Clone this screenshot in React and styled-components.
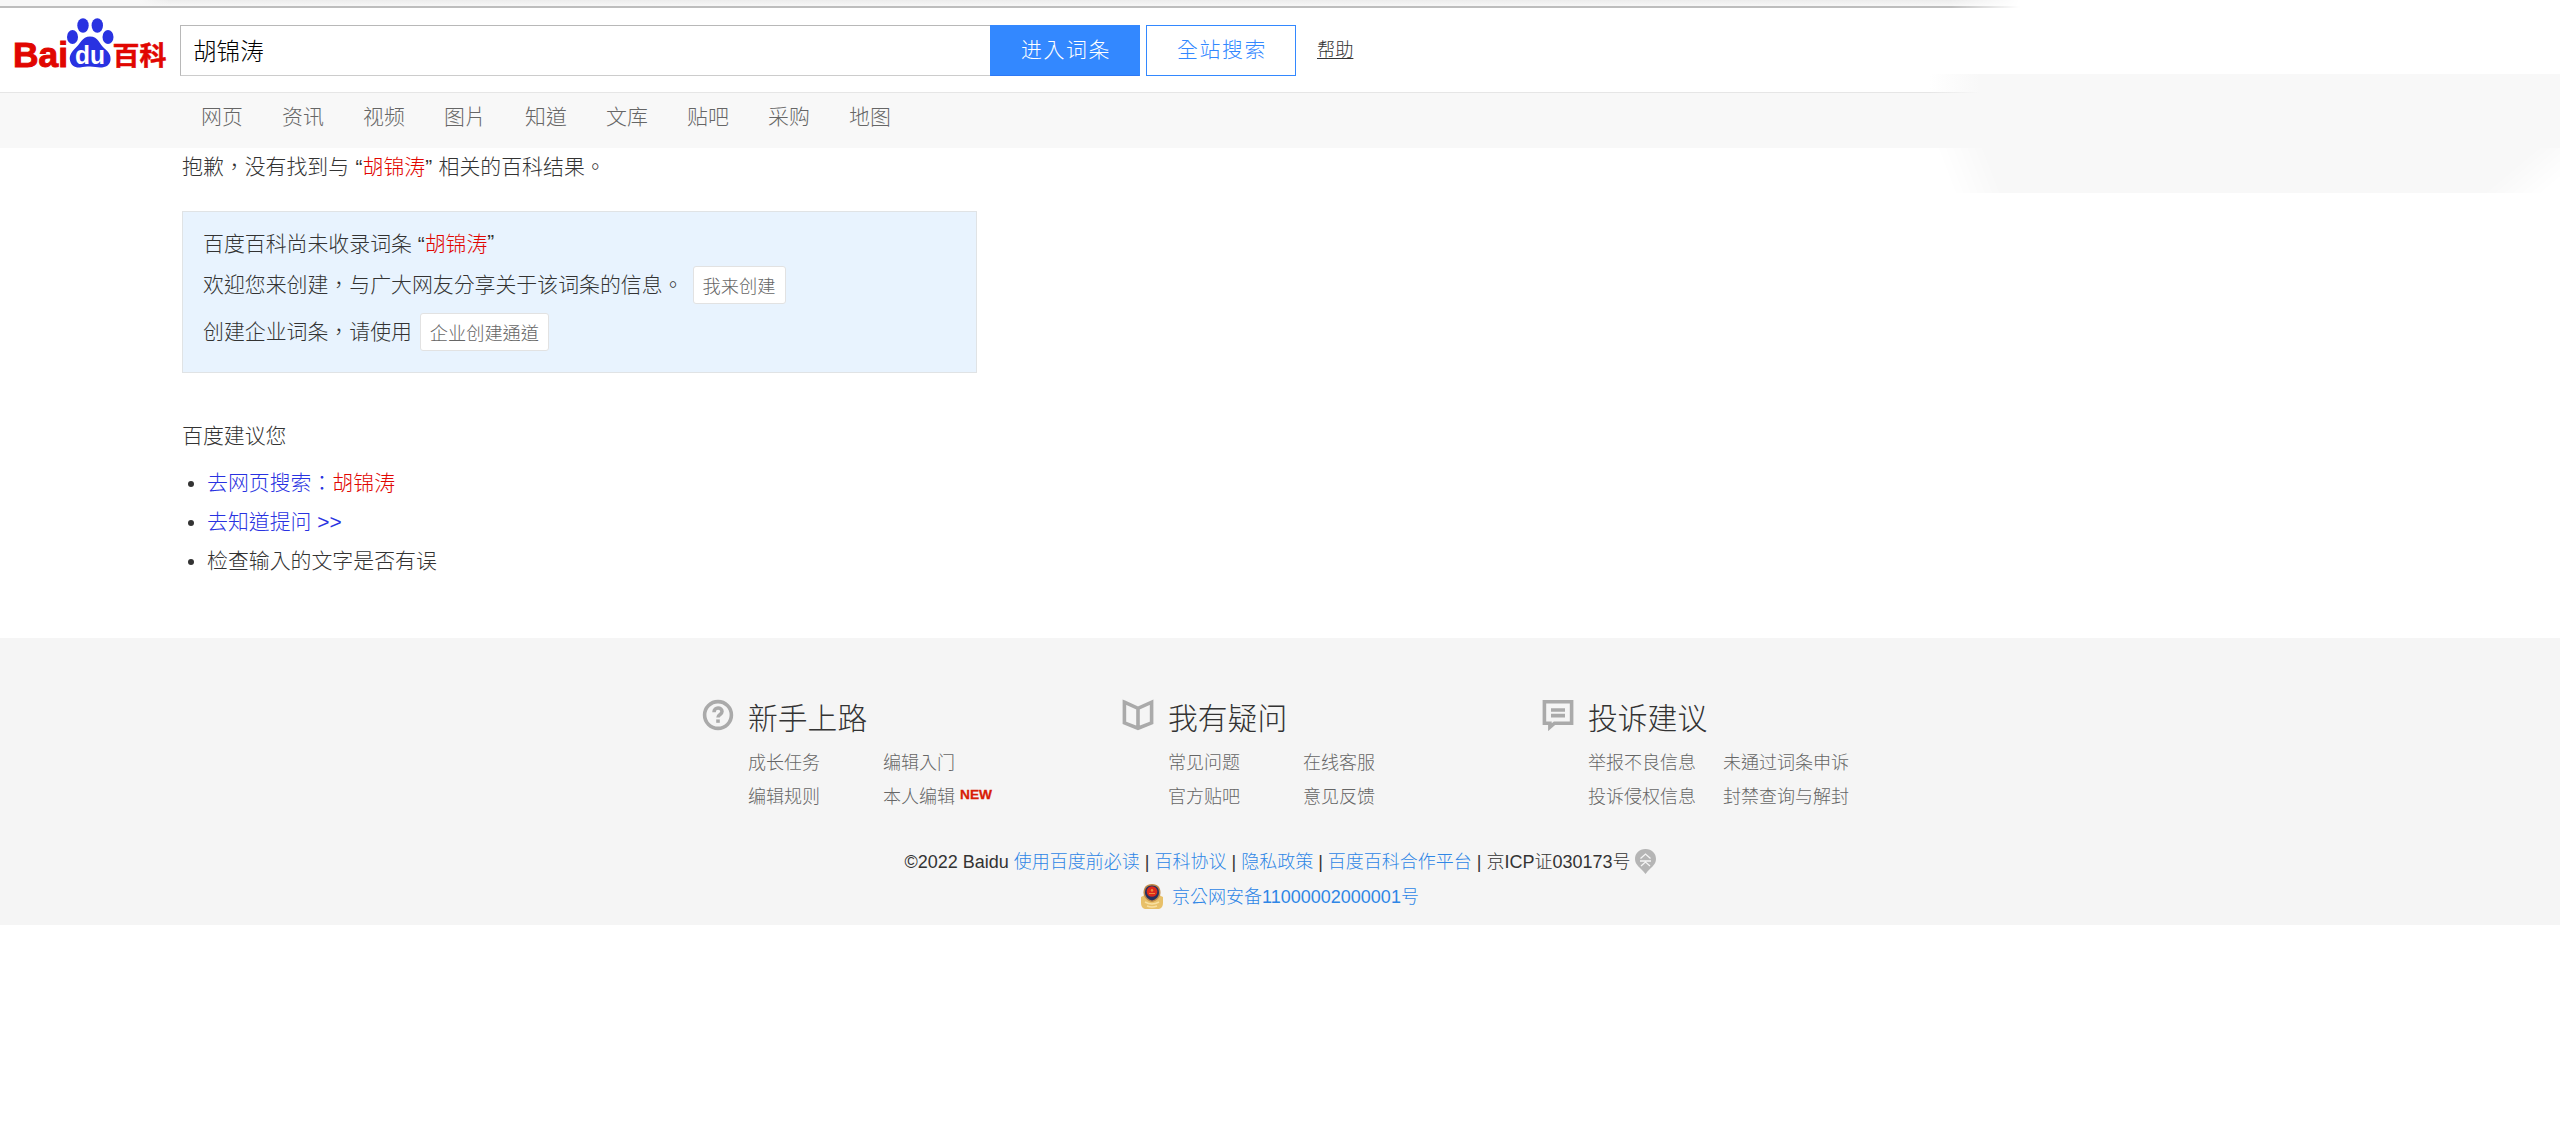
import React from "react";
import styled, { createGlobalStyle, css } from "styled-components";

const GlobalStyle = createGlobalStyle`
  * { box-sizing: border-box; }
  body {
    margin: 0;
    background: #fff;
    color: #333;
    font-family: "Liberation Sans", "Noto Sans CJK TC", "Noto Sans CJK SC", sans-serif;
    font-size: 20.9px;
    font-weight: 300;
  }
  a { color: inherit; text-decoration: none; }
`;

const Page = styled.div`
  position: relative;
  width: 100%;
  min-height: 1142px;
  overflow: hidden;
`;

const TopStrip = styled.div`
  height: 8px;
  border-bottom: 2px solid #bdbdbd;
  background: linear-gradient(90deg, #f7f7f7 140px, transparent 170px),
    linear-gradient(#ececec, #f7f7f7);
  mask-image: linear-gradient(90deg, #000 1950px, transparent 2020px);
`;

const Header = styled.header`
  display: flex;
  align-items: flex-start;
  height: 84px;
  padding: 8px 0 0 14px;
`;

const Logo = styled.svg`
  flex: none;
  width: 154px;
  height: 64px;
  margin-right: 12px;
  overflow: visible;
`;

const SearchInput = styled.input`
  flex: none;
  width: 810px;
  height: 51px;
  margin-top: 9px;
  padding: 0 12px 1px;
  border: 1px solid #b8b8b8;
  border-bottom-color: #ccc;
  border-right: 0;
  border-radius: 0;
  outline: 0;
  color: #000;
  font: inherit;
  font-size: 23.6px;
`;

const SearchButton = styled.button`
  width: 150px;
  height: 51px;
  margin: 9px 6px 0 0;
  padding: 0 0 5px 2px;
  border: 1px solid #38f;
  background: #38f;
  color: #fff;
  font: inherit;
  letter-spacing: 1.6px;
  ${({ $primary }) =>
    $primary
      ? css`border-bottom-color: #2d78f4;`
      : css`
          background: #fff;
          color: #38f;
        `}
`;

const Help = styled.a`
  margin: 21px 0 0 15px;
  font-size: 18.2px;
  line-height: 27px;
  text-decoration: underline;
  text-underline-offset: 2px;
`;

const Nav = styled.nav`
  display: flex;
  height: 56px;
  padding-left: 201px;
  border-top: 1px solid #e6e6e6;
  background: #f8f8f8;
  color: #666;
`;

const NavLink = styled.a`
  width: 81px;
  line-height: 47px;
`;

const Haze = styled.div`
  position: absolute;
  top: 74px;
  right: 0;
  width: 630px;
`;

const HazeBand = styled.div`
  height: 74px;
  background: linear-gradient(90deg, transparent, #f8f8f8 50px);
`;

const HazeTail = styled.div`
  height: 45px;
  background: #f8f8f8;
  mask-image: linear-gradient(69deg, transparent 21px, #000 68px),
    linear-gradient(-40deg, transparent 10px, #000 50px);
  mask-composite: intersect;
`;

const Main = styled.main`
  height: 490px;
  padding-left: 182px;
`;

const Message = styled.p`
  margin: 0;
  padding-top: 3px;
  line-height: 31px;
  word-spacing: 0.6px;
`;

const Keyword = styled.em`
  color: #e10601;
  font-style: normal;
`;

const CreateBox = styled.section`
  display: flex;
  flex-direction: column;
  width: 795px;
  height: 162px;
  margin-top: 29px;
  padding: 12px 20px;
  border: 1px solid #e0e3e5;
  background: #e8f3fe;
`;

const CreateRow = styled.div`
  display: flex;
  align-items: center;
  height: ${({ $h }) => $h}px;
  white-space: pre;
`;

const SmallButton = styled.button`
  width: ${({ $w }) => $w}px;
  height: 38px;
  margin: 4px 0 0 ${({ $gap }) => $gap}px;
  padding: 0 0 1px;
  border: 1px solid #e2e2e2;
  border-radius: 3px;
  background: #fff;
  color: #666;
  font: inherit;
  font-size: 18.2px;
`;

const SuggestTitle = styled.h2`
  margin: 48px 0 0;
  font-size: 20.9px;
  font-weight: 300;
  line-height: 30px;
`;

const SuggestList = styled.ul`
  margin: 12px 0 0;
  padding: 0 0 0 25px;
  line-height: 39px;
`;

const SuggestLink = styled.a`
  color: #2932e1;
`;

const Footer = styled.footer`
  height: 287px;
  background: #f5f5f5;
`;

const Columns = styled.div`
  display: flex;
  height: 207px;
  padding: 62px 0 0 702px;
`;

const Column = styled.section`
  display: flex;
  width: 420px;
`;

const ColumnIcon = styled.svg`
  flex: none;
  width: 32px;
  height: 32px;
  margin: -1px 14px 0 0;
  fill: none;
  stroke: #aaa;
  stroke-width: 3.6;
`;

const ColumnTitle = styled.h3`
  margin: 0;
  font-size: 29.8px;
  font-weight: 300;
  line-height: 38px;
`;

const LinkGrid = styled.div`
  display: grid;
  grid-template-columns: 135px 150px;
  margin-top: 8px;
  color: #666;
  font-size: 18px;
  line-height: 34px;
`;

const FooterLink = styled.a`
  display: flex;
  white-space: nowrap;
`;

const NewTag = styled.svg`
  width: 34px;
  height: 18px;
  margin: 5px 0 0 5px;
  overflow: visible;
`;

const Legal = styled.div`
  display: flex;
  justify-content: center;
  align-items: center;
  height: 35px;
  font-size: 18px;
  line-height: 35px;
  white-space: pre;
`;

const BlueLink = styled.a`
  color: #2e86e6;
`;

const PinIcon = styled.svg`
  width: 21px;
  height: 25px;
  margin: 0 0 3px 4px;
`;

const PoliceIcon = styled.svg`
  width: 22px;
  height: 25px;
  margin: 0 9px 3px 0;
`;

const navItems = ["网页", "资讯", "视频", "图片", "知道", "文库", "贴吧", "采购", "地图"];

const columns = [
  { title: "新手上路", icon: "help", links: ["成长任务", "编辑入门", "编辑规则", "本人编辑"] },
  { title: "我有疑问", icon: "book", links: ["常见问题", "在线客服", "官方贴吧", "意见反馈"] },
  { title: "投诉建议", icon: "note", links: ["举报不良信息", "未通过词条申诉", "投诉侵权信息", "封禁查询与解封"] },
];

const icons = {
  help: (
    <>
      <circle cx="16" cy="16" r="13.4" />
      <path d="M12 13.2c0-5.6 8-5.2 8-.6 0 3.1-4 2.7-4 6" />
      <path d="M16 20.4v3.4" />
    </>
  ),
  book: (
    <path d="M2.4 3.2 16 9.3 29.6 3.2v20.6L16 29.2 2.4 23.8zM16 9v20" />
  ),
  note: (
    <>
      <path d="M2.4 2.8h27.2v21.4H12.5l-4.6 4v-4H2.4z" />
      <path d="M9 11h14M9 16.6h14" />
    </>
  ),
};

function BaikeLogo() {
  return (
    <Logo viewBox="0 8 154 64">
      <g fontWeight="700" fill="#e10601" stroke="#e10601">
        <text x="-1" y="58.500" fontSize="35" strokeWidth="1" textLength="55" lengthAdjust="spacingAndGlyphs" fontFamily="Liberation Sans">Bai</text>
        <text x="98.500" y="56.500" fontSize="26" strokeWidth=".5" textLength="54" lengthAdjust="spacingAndGlyphs" fontFamily="Noto Sans CJK SC">百科</text>
      </g>
      <g fill="#2932e1">
        <ellipse cx="58.500" cy="29" rx="5.500" ry="7" />
        <ellipse cx="69" cy="17.500" rx="5.700" ry="7.300" />
        <ellipse cx="83.300" cy="17.500" rx="5.700" ry="7.300" />
        <ellipse cx="94" cy="29" rx="5.500" ry="7" />
        <path d="M76 28.500c-8 0-10 8-15 12-4 4-6 8-5 12 1 5 5 7.500 10 7 4-.6 6-1 10-1s7 1 10 1c6 0 10-2.500 10.500-7.500.5-5-2-8-6-11.500-5-4-6-12-14.500-12z" />
      </g>
      <text x="61" y="55.500" fontSize="25" fontWeight="700" fill="#fff" textLength="30" lengthAdjust="spacingAndGlyphs" fontFamily="Liberation Sans">du</text>
    </Logo>
  );
}

export default function App() {
  return (
    <Page>
      <GlobalStyle />
      <TopStrip />
      <Header>
        <BaikeLogo />
        <SearchInput defaultValue="胡锦涛" />
        <SearchButton $primary>进入词条</SearchButton>
        <SearchButton>全站搜索</SearchButton>
        <Help>帮助</Help>
      </Header>
      <Nav>
        {navItems.map((item) => (
          <NavLink key={item}>{item}</NavLink>
        ))}
      </Nav>
      <Haze>
        <HazeBand />
        <HazeTail />
      </Haze>
      <Main>
        <Message>
          抱歉，没有找到与 “<Keyword>胡锦涛</Keyword>” 相关的百科结果。
        </Message>
        <CreateBox>
          <CreateRow $h={35}>
            百度百科尚未收录词条 “<Keyword>胡锦涛</Keyword>”
          </CreateRow>
          <CreateRow $h={48}>
            欢迎您来创建，与广大网友分享关于该词条的信息。
            <SmallButton $w={93} $gap={9}>我来创建</SmallButton>
          </CreateRow>
          <CreateRow $h={46}>
            创建企业词条，请使用
            <SmallButton $w={129} $gap={8}>企业创建通道</SmallButton>
          </CreateRow>
        </CreateBox>
        <SuggestTitle>百度建议您</SuggestTitle>
        <SuggestList>
          <li>
            <SuggestLink>去网页搜索：<Keyword>胡锦涛</Keyword></SuggestLink>
          </li>
          <li>
            <SuggestLink>去知道提问 &gt;&gt;</SuggestLink>
          </li>
          <li>检查输入的文字是否有误</li>
        </SuggestList>
      </Main>
      <Footer>
        <Columns>
          {columns.map(({ title, icon, links }) => (
            <Column key={title}>
              <ColumnIcon viewBox="0 0 32 32">{icons[icon]}</ColumnIcon>
              <div>
                <ColumnTitle>{title}</ColumnTitle>
                <LinkGrid>
                  {links.map((link) => (
                    <FooterLink key={link}>
                      {link}
                      {link === "本人编辑" && (
                        <NewTag viewBox="0 0 34 18">
                          <text x="0" y="14" fontSize="13.500" fontWeight="700" fill="#d81e06" stroke="#d81e06" strokeWidth=".3" textLength="32" lengthAdjust="spacingAndGlyphs">NEW</text>
                        </NewTag>
                      )}
                    </FooterLink>
                  ))}
                </LinkGrid>
              </div>
            </Column>
          ))}
        </Columns>
        <Legal>
          ©2022 Baidu <BlueLink>使用百度前必读</BlueLink> | <BlueLink>百科协议</BlueLink> | <BlueLink>隐私政策</BlueLink> | <BlueLink>百度百科合作平台</BlueLink> | 京ICP证030173号
          <PinIcon viewBox="0 0 21 25">
            <path d="M10.500 0C4 0 0 4.500 0 10c0 6 5 8 10.500 15C16 18 21 16 21 10 21 4.500 17 0 10.500 0z" fill="#b5b5b5" />
            <path d="M5.500 9.500 10.500 5l5 4.500M5 12h11M10.500 12v2M6 17l4.500-4 4.500 4" fill="none" stroke="#f5f5f5" strokeWidth="1.300" />
          </PinIcon>
        </Legal>
        <Legal>
          <PoliceIcon viewBox="0 0 22 25">
            <path d="M0 13q3-1 4-3h14q1 2 4 3v6q0 5-4 6H4q-4-1-4-6z" fill="#e8c069" />
            <path d="M11 0C17 0 19.500 4 19.500 8.500 19.500 13 16 17 11 18 6 17 2.500 13 2.500 8.500 2.500 4 5 0 11 0z" fill="#c08a48" />
            <path d="M11 1.500c5 0 7 3 7 7 0 4-3 7-7 8-4-1-7-4-7-8 0-4 2-7 7-7z" fill="#27305f" />
            <circle cx="11" cy="7.500" r="5.300" fill="#dc2a1c" />
            <path d="M8 9.500h6M10 7 11 5l1 2z" stroke="#f08a38" fill="#f0a040" />
            <path d="M4 18q7 4 14 0M6 22q5 2 10 0" stroke="#f9e0a0" strokeWidth="1.500" fill="none" />
          </PoliceIcon>
          <BlueLink>京公网安备11000002000001号</BlueLink>
        </Legal>
      </Footer>
    </Page>
  );
}
